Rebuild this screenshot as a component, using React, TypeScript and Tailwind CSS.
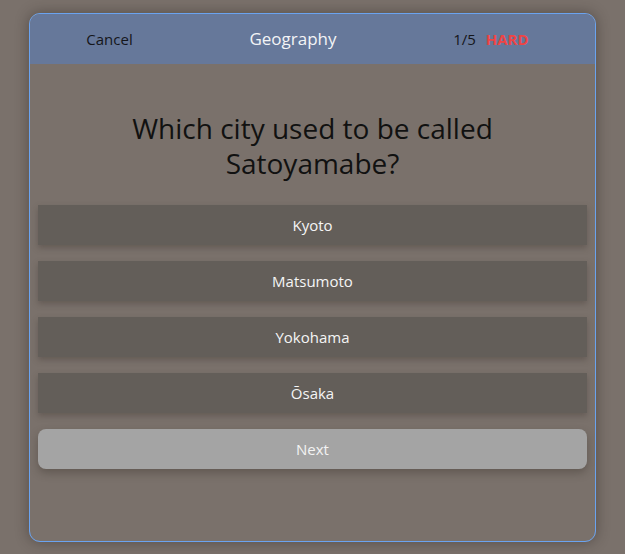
import React from "react";

export default function App() {
  const options = ["Kyoto", "Matsumoto", "Yokohama", "Ōsaka"];
  return (
    <div
      className="w-[625px] h-[554px] bg-[#7a716b] pt-[13px] pl-[29px]"
      style={{ fontFamily: '"Open Sans", "Noto Sans", sans-serif' }}
    >
      <div className="w-[567px] h-[529px] rounded-[11px] border border-[#6aa3f0] overflow-hidden shadow-[0_0_14px_rgba(40,34,30,0.45)] flex flex-col">
        <div className="h-[50px] bg-[#66789a] flex items-center justify-around">
          <span className="text-[15px] text-[#15161a] -ml-[6px]">Cancel</span>
          <span className="text-[17px] text-[#f3f4f6] -ml-[8px]">Geography</span>
          <span className="text-[15px] text-[#15161a] flex gap-[10px] -ml-[8px] mr-[4px]">
            <span>1/5</span>
            <span className="font-bold text-[#ef4444]">HARD</span>
          </span>
        </div>
        <div className="flex flex-col px-[8px]">
          <div className="px-[70px] pt-[47px] pb-[24px] text-center text-[28px] leading-[35px] text-[#111111]">
            Which city used to be called Satoyamabe?
          </div>
          <div className="flex flex-col gap-[16px]">
            {options.map((o) => (
              <div
                key={o}
                className="h-[40px] bg-[#635e59] flex items-center justify-center text-[15px] text-[#f5f5f5] shadow-[0_3px_6px_rgba(60,52,46,0.35)]"
              >
                {o}
              </div>
            ))}
          </div>
          <div className="mt-[16px] h-[40px] rounded-[8px] bg-[#a4a4a4] flex items-center justify-center text-[15px] text-[#f3f3f3] shadow-[0_4px_8px_rgba(60,52,46,0.4)]">
            Next
          </div>
        </div>
      </div>
    </div>
  );
}
